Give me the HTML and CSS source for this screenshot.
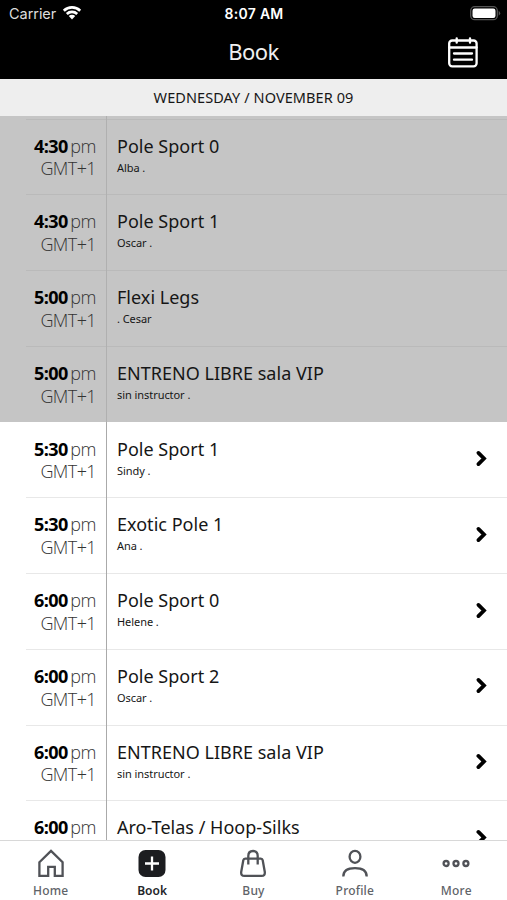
FILE: index.html
```
<!DOCTYPE html>
<html lang="en">
<head>
<meta charset="utf-8">
<title>Book</title>
<link rel="stylesheet" href="styles.css">
</head>
<body>
<div class="app">
<header class="header">
  <div class="status">
    <div class="carrier"><span>Carrier</span><svg width="20" height="16" viewBox="0 0 20 16" fill="none" stroke="#fff" stroke-width="2.7"><path d="M1.8 5.7a11.8 11.8 0 0 1 16.4 0M4.8 9a7.5 7.5 0 0 1 10.4 0"/><path d="M6.8 11.1a4.5 4.5 0 0 1 6.4 0L10 14.5Z" fill="#fff" stroke="none"/></svg></div>
    <div class="clock">8:07 AM</div>
    <svg class="battery" width="31" height="15" viewBox="0 0 31 15"><rect x=".7" y=".7" width="26.6" height="13" rx="4" fill="none" stroke="#555" stroke-width="1.3"/><rect x="2.5" y="2.5" width="23" height="9.5" rx="2.2" fill="#fff"/><path d="M28.7 4.7q3 2.5 0 5Z" fill="#555"/></svg>
  </div>
  <div class="nav">
    <h1>Book</h1>
    <svg class="calendar" width="30" height="31" viewBox="0 0 30 31" fill="none" stroke="#fff" stroke-width="2.3" stroke-linecap="round"><rect x="1.2" y="3.5" width="27.4" height="25.8" rx="3"/><path d="M1.2 10.5h27.4M8.7 1.3v4.4M22 1.3v4.4M6 16.5h18M6 22.7h18"/></svg>
  </div>
</header>
<div class="date">WEDNESDAY / NOVEMBER 09</div>
<main class="list">
  <div class="row past"><div class="time"><p><b>4:30</b><span>pm</span></p><p class="zone">GMT+1</p></div><div class="info"><h2>Pole Sport 0</h2><p>Alba .</p></div></div>
  <div class="row past"><div class="time"><p><b>4:30</b><span>pm</span></p><p class="zone">GMT+1</p></div><div class="info"><h2>Pole Sport 1</h2><p>Oscar .</p></div></div>
  <div class="row past"><div class="time"><p><b>5:00</b><span>pm</span></p><p class="zone">GMT+1</p></div><div class="info"><h2>Flexi Legs</h2><p>. Cesar</p></div></div>
  <div class="row past"><div class="time"><p><b>5:00</b><span>pm</span></p><p class="zone">GMT+1</p></div><div class="info"><h2>ENTRENO LIBRE sala VIP</h2><p>sin instructor .</p></div></div>
  <div class="row"><div class="time"><p><b>5:30</b><span>pm</span></p><p class="zone">GMT+1</p></div><div class="info"><h2>Pole Sport 1</h2><p>Sindy .</p></div><svg class="chevron" viewBox="0 0 14 21"><path d="m4.4 4.9 5.6 5.6-5.6 5.6"/></svg></div>
  <div class="row"><div class="time"><p><b>5:30</b><span>pm</span></p><p class="zone">GMT+1</p></div><div class="info"><h2>Exotic Pole 1</h2><p>Ana .</p></div><svg class="chevron" viewBox="0 0 14 21"><path d="m4.4 4.9 5.6 5.6-5.6 5.6"/></svg></div>
  <div class="row"><div class="time"><p><b>6:00</b><span>pm</span></p><p class="zone">GMT+1</p></div><div class="info"><h2>Pole Sport 0</h2><p>Helene .</p></div><svg class="chevron" viewBox="0 0 14 21"><path d="m4.4 4.9 5.6 5.6-5.6 5.6"/></svg></div>
  <div class="row"><div class="time"><p><b>6:00</b><span>pm</span></p><p class="zone">GMT+1</p></div><div class="info"><h2>Pole Sport 2</h2><p>Oscar .</p></div><svg class="chevron" viewBox="0 0 14 21"><path d="m4.4 4.9 5.6 5.6-5.6 5.6"/></svg></div>
  <div class="row"><div class="time"><p><b>6:00</b><span>pm</span></p><p class="zone">GMT+1</p></div><div class="info"><h2>ENTRENO LIBRE sala VIP</h2><p>sin instructor .</p></div><svg class="chevron" viewBox="0 0 14 21"><path d="m4.4 4.9 5.6 5.6-5.6 5.6"/></svg></div>
  <div class="row"><div class="time"><p><b>6:00</b><span>pm</span></p></div><div class="info"><h2>Aro-Telas / Hoop-Silks</h2></div><svg class="chevron" viewBox="0 0 14 21"><path d="m4.4 4.9 5.6 5.6-5.6 5.6"/></svg></div>
</main>
<nav class="tabs">
  <a class="tab"><svg viewBox="0 0 30 30"><path d="M3.4 13.2 15 1.9l11.6 11.3v13.6h-7.8v-9h-6.6v9H3.4Z"/></svg><span>Home</span></a>
  <a class="tab active"><svg viewBox="0 0 30 30"><rect x="1.5" y="1" width="27" height="27" rx="7" fill="#1c1d20" stroke="none"/><path d="M15 7.5v14M8 14.5h14" stroke="#fff" stroke-width="2.3"/></svg><span>Book</span></a>
  <a class="tab"><svg viewBox="0 0 30 30"><path d="M7.2 9.7h15.6q1.6 0 1.9 1.6l2.1 11.7q.4 3.9-3.2 3.9H6.4q-3.6 0-3.2-3.9l2.1-11.7q.3-1.6 1.9-1.6Z"/><path d="M10.3 15.5V7q0-5 4.7-5t4.7 5v8.5"/></svg><span>Buy</span></a>
  <a class="tab"><svg viewBox="0 0 30 30"><ellipse cx="15" cy="7.8" rx="5.4" ry="6"/><path d="M3.3 27.5c0-5.6 4.2-8.3 11.7-8.3s11.7 2.7 11.7 8.3"/></svg><span>Profile</span></a>
  <a class="tab"><svg viewBox="0 0 30 30"><circle cx="5.1" cy="14.5" r="2.5"/><circle cx="15" cy="14.5" r="2.5"/><circle cx="24.9" cy="14.5" r="2.5"/></svg><span>More</span></a>
</nav>
</div>
</body>
</html>
```
FILE: styles.css
```
* { box-sizing: border-box; }
body, h1, h2, p { margin: 0; font-weight: 400; }
body { background: #fff; color: #161616; font-family: "Noto Sans", sans-serif; }
.app { width: 507px; height: 900px; display: flex; flex-direction: column; overflow: hidden; }
.header { height: 79px; flex: none; background: #000; color: #fff; }
.status { height: 27px; display: grid; grid-template-columns: 1fr auto 1fr; align-items: center; padding: 0 6px 0 9px; font: 14.5px/27px Inter, sans-serif; }
.carrier { display: flex; align-items: center; gap: 6px; color: #ddd; letter-spacing: -.05px; }
.carrier svg { margin-top: -2px; }
.clock { font-weight: 600; font-size: 14px; letter-spacing: .3px; margin-left: -2px; }
.battery { justify-self: end; }
.nav { height: 52px; display: grid; grid-template-columns: 1fr auto 1fr; align-items: center; padding-right: 29px; padding-left: 29px; }
.nav h1 { grid-column: 2; font-size: 22px; line-height: 48px; letter-spacing: -.5px; margin-top: -4px; color: #f0f0f0; }
.calendar { justify-self: end; margin-top: -1px; }
.date { height: 37px; flex: none; background: #eee; text-align: center; font-size: 14.5px; line-height: 37px; letter-spacing: .08px; }
.list { flex: 1; min-height: 0; overflow: hidden; padding-top: 2.5px; background: linear-gradient(#b0b0b0, #b0b0b0) 106px 0 / 1px 3px no-repeat, linear-gradient(#c5c5c5 0 10px, #fff 10px); }
.row { height: 75.75px; display: grid; grid-template-columns: 81px 1fr auto; padding-left: 26px; padding-right: 19px; background: linear-gradient(#e8e8e8, #e8e8e8) 26px 0 / 481px 1px no-repeat; }
.past { background-color: #c5c5c5; background-image: linear-gradient(#bababa, #bababa); }
.past + .row:not(.past) { background-image: none; }
.time { border-right: 1px solid #aaa; padding: 15px 10px 0 0; font: 18px/25px "Open Sans", sans-serif; text-align: right; color: #333; }
.past .time { border-color: #b0b0b0; }
.time b { color: #000; font-weight: 700; letter-spacing: -.6px; }
.time span { font-weight: 300; margin-left: 2.5px; letter-spacing: -.4px; }
.time .zone { font-weight: 300; line-height: 22px; margin-top: -1.2px; letter-spacing: -.6px; }
.info { padding: 15px 0 0 10px; }
.info h2 { font-size: 18px; line-height: 25px; white-space: nowrap; letter-spacing: .02px; }
.info p { font-size: 11px; line-height: 16px; margin-top: 1px; letter-spacing: -.06px; }
.chevron { width: 14px; height: 21px; margin-top: 26.5px; fill: none; stroke: #000; stroke-width: 3.8; stroke-linecap: round; }
.tabs { height: 60px; flex: none; display: grid; grid-template-columns: repeat(5, 1fr); border-top: 1px solid #d8d8d8; background: #fff; }
.tab { display: flex; flex-direction: column; align-items: center; padding-top: 8px; color: #606368; font-size: 12px; font-weight: 500; line-height: 16px; letter-spacing: .2px; }
.tab svg { width: 30px; height: 30px; fill: none; stroke: #505257; stroke-width: 2.3; }
.tab span { margin-top: 4px; }
.active { color: #242529; font-weight: 600; letter-spacing: 0; }
```
